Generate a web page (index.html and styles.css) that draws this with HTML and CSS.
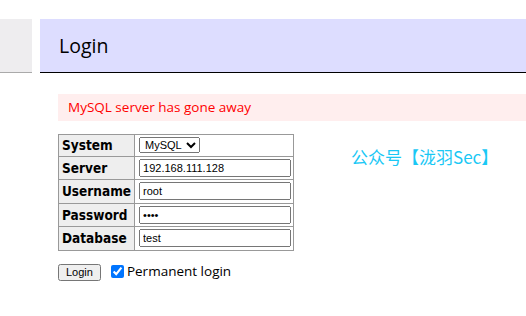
FILE: index.html
```html
<!DOCTYPE html>
<html>
  <head>
    <title>Login - Adminer</title>
    <link rel="stylesheet" href="styles.css">
  </head>
  <body>
    <div class="page">
      <div class="menu"></div>
      <div class="content">
        <h2>Login</h2>
        <div class="error">MySQL server has gone away</div>
        <form class="login-form">
          <table class="layout">
            <tr>
              <th>System</th>
              <td>
                <select name="driver">
                  <option>MySQL</option>
                </select>
              </td>
            </tr>
            <tr>
              <th>Server</th>
              <td><input type="text" value="192.168.111.128"></td>
            </tr>
            <tr>
              <th>Username</th>
              <td><input type="text" value="root"></td>
            </tr>
            <tr>
              <th>Password</th>
              <td><input type="password" value="root"></td>
            </tr>
            <tr>
              <th>Database</th>
              <td><input type="text" value="test"></td>
            </tr>
          </table>
          <div class="actions">
            <button type="button">Login</button>
            <label class="permanent">
              <input type="checkbox" checked> Permanent login
            </label>
          </div>
        </form>
      </div>
    </div>
    <div class="watermark">公众号【泷羽Sec】</div>
  </body>
</html>
```

FILE: styles.css
```css
body {
  margin: 0;
  padding-top: 19px;
  font-family: "Open Sans", "Noto Sans", sans-serif;
  background: #fff;
  color: #000;
}
.page {
  display: flex;
  gap: 8px;
}
.menu {
  width: 32px;
  height: 53px;
  background: #eeedef;
  border-bottom: 1px solid #aaa;
  flex-shrink: 0;
}
.content {
  flex: 1;
}
h2 {
  margin: 0;
  height: 54px;
  box-sizing: border-box;
  padding: 14px 0 0 19px;
  font-size: 19.5px;
  font-weight: normal;
  line-height: 25px;
  background: #ddf;
  border-bottom: 1px solid #000;
}
.error {
  margin: 21px 0 0 18px;
  height: 27px;
  padding-left: 10px;
  line-height: 27px;
  font-size: 13.5px;
  background: #fee;
  color: #f00;
}
.login-form {
  margin: 13px 0 0 18px;
}
.layout {
  border-collapse: collapse;
  border: 1px solid #999;
}
.layout th,
.layout td {
  border: 1px solid #999;
  padding: 2.25px 2px 2.25px 4px;
}
.layout th {
  width: 68px;
  padding: 2.25px 3px;
  text-align: left;
  background: #eee;
  font-family: "DejaVu Sans Condensed", "DejaVu Sans", sans-serif;
  font-weight: bold;
  font-size: 13.5px;
  line-height: 16px;
}
.layout input {
  width: 152px;
  height: 18px;
  box-sizing: border-box;
  margin: 0;
  padding: 1px 2px;
  font-family: "Liberation Sans", Arial, sans-serif;
  font-size: 11px;
  display: block;
}
.layout select {
  height: 16px;
  margin: 0;
  padding: 0 1px;
  font-family: "Liberation Sans", Arial, sans-serif;
  font-size: 11px;
  display: block;
}
.actions {
  margin-top: 13px;
  display: flex;
  align-items: flex-start;
  gap: 10px;
}
.actions button {
  height: 17px;
  padding: 0 6px;
  font-family: "Liberation Sans", Arial, sans-serif;
  font-size: 11px;
}
.permanent {
  display: flex;
  align-items: center;
  gap: 3px;
  font-size: 13.5px;
  line-height: 15px;
}
.permanent input {
  margin: 0;
  width: 13px;
  height: 13px;
}
.watermark {
  position: absolute;
  left: 351px;
  top: 144px;
  font-family: "Noto Sans CJK SC", sans-serif;
  font-size: 17px;
  color: #1ac8f5;
}
```
